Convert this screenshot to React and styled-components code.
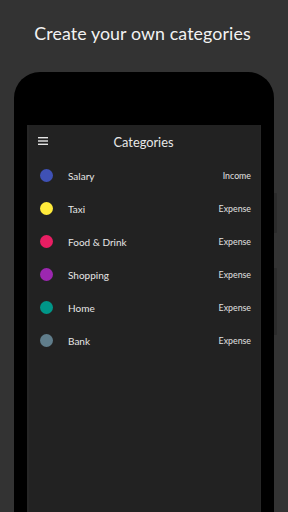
import React from "react";
import styled, { createGlobalStyle } from "styled-components";

const Global = createGlobalStyle`
  html, body { margin: 0; padding: 0; background: #333333; }
  body { font-family: "Lato", "Noto Sans", sans-serif; }
  #root { width: 288px; height: 512px; overflow: hidden; }
`;

const Page = styled.div`
  width: 288px;
  height: 512px;
  background: #333333;
  display: flex;
  flex-direction: column;
  align-items: center;
  overflow: hidden;
`;

const Title = styled.h1`
  margin: 22px 0 0 -3px;
  height: 22px;
  line-height: 22px;
  font-family: "Lato", "Noto Sans", sans-serif;
  font-weight: 400;
  font-size: 17.8px;
  color: #f2f2f2;
  letter-spacing: 0.1px;
`;

const Phone = styled.div`
  position: relative;
  margin-top: 28px;
  width: 260px;
  flex: 1;
  background: #000;
  border-radius: 26px 26px 0 0;
  padding: 53px 13px 0;
  box-sizing: border-box;
  display: flex;
  flex-direction: column;
`;

const SideButton = styled.div`
  position: absolute;
  right: -3px;
  top: ${(p) => p.$top}px;
  height: ${(p) => p.$h}px;
  width: 3px;
  background: #2b2b2b;
  border-radius: 0 1px 1px 0;
`;

const Screen = styled.div`
  flex: 1;
  background: #222222;
  display: flex;
  flex-direction: column;
  box-shadow: inset 2px 0 0 #262626, inset -1px 0 0 #262626;
`;

const Header = styled.div`
  position: relative;
  height: 33px;
  display: flex;
  align-items: center;
  justify-content: center;
`;

const Menu = styled.svg`
  position: absolute;
  left: 11px;
  top: 12px;
`;

const HeaderTitle = styled.div`
  font-size: 12.8px;
  color: #e8e8e8;
  margin-left: -1px;
`;

const List = styled.div`
  padding-top: 1px;
  display: flex;
  flex-direction: column;
`;

const Row = styled.div`
  height: 33px;
  display: flex;
  align-items: center;
  padding: 0 10px 0 13px;
`;

const Dot = styled.span`
  width: 13px;
  height: 13px;
  border-radius: 50%;
  background: ${(p) => p.$color};
  flex-shrink: 0;
`;

const Name = styled.span`
  margin-left: 15px;
  font-size: 10px;
  color: #e6e6e6;
  flex: 1;
`;

const Kind = styled.span`
  font-size: 8.8px;
  color: #e0e0e0;
`;

const items = [
  ["Salary", "Income", "#3f51b5"],
  ["Taxi", "Expense", "#ffeb3b"],
  ["Food & Drink", "Expense", "#e91e63"],
  ["Shopping", "Expense", "#9c27b0"],
  ["Home", "Expense", "#009688"],
  ["Bank", "Expense", "#607d8b"],
];

export default function App() {
  return (
    <Page>
      <Global />
      <Title>Create your own categories</Title>
      <Phone>
        <SideButton $top={121} $h={40} />
        <SideButton $top={196} $h={67} />
        <Screen>
          <Header>
            <Menu width="10" height="8" viewBox="0 0 10 8">
              <rect x="0" y="0" width="10" height="1.4" fill="#e6e6e6" />
              <rect x="0" y="3.3" width="10" height="1.4" fill="#e6e6e6" />
              <rect x="0" y="6.6" width="10" height="1.4" fill="#e6e6e6" />
            </Menu>
            <HeaderTitle>Categories</HeaderTitle>
          </Header>
          <List>
            {items.map(([n, k, c]) => (
              <Row key={n}>
                <Dot $color={c} />
                <Name>{n}</Name>
                <Kind>{k}</Kind>
              </Row>
            ))}
          </List>
        </Screen>
      </Phone>
    </Page>
  );
}
